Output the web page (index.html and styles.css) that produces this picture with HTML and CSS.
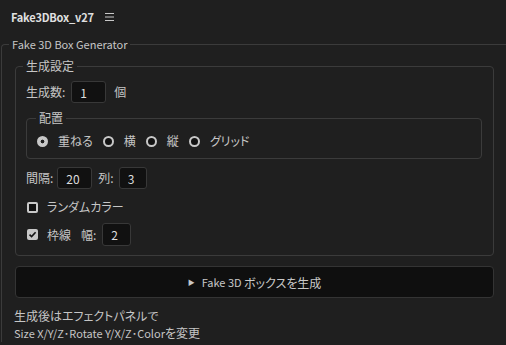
FILE: index.html
```html
<!DOCTYPE html>
<html lang="ja">
<head>
    <meta charset="UTF-8">
    <title>Fake3DBox_v27</title>
    <link rel="stylesheet" href="styles.css">
</head>
<body>
    <div class="panel-header">
        <span class="panel-title">Fake3DBox_v27</span>
        <svg class="menu-icon" width="9" height="8" viewBox="0 0 9 8">
            <path d="M0 0.5H9M0 4H9M0 7.5H9" stroke="#c8c8c8" stroke-width="1"/>
        </svg>
    </div>

    <fieldset class="generator">
        <legend class="lat">Fake 3D Box Generator</legend>

        <!-- 生成設定 -->
        <fieldset class="settings">
            <legend>生成設定</legend>

            <div class="row">
                <span>生成数:</span>
                <input class="field w35" type="text" value="1">
                <span class="unit">個</span>
            </div>

            <fieldset class="layout">
                <legend>配置</legend>
                <div class="radio-row">
                    <label class="option"><span class="radio checked"></span>重ねる</label>
                    <label class="option"><span class="radio"></span>横</label>
                    <label class="option"><span class="radio"></span>縦</label>
                    <label class="option"><span class="radio"></span>グリッド</label>
                </div>
            </fieldset>

            <div class="row spacing-row">
                <span>間隔:</span>
                <input class="field w35 gap-in" type="text" value="20">
                <span class="col-label">列:</span>
                <input class="field w28" type="text" value="3">
            </div>

            <label class="check-row">
                <span class="checkbox"></span>
                <span>ランダムカラー</span>
            </label>

            <div class="row stroke-row">
                <span class="checkbox checked">
                    <svg width="9" height="9" viewBox="0 0 9 9">
                        <path d="M1.5 4.6L3.6 6.6L7.6 2.2" fill="none" stroke="#151515" stroke-width="1.6"/>
                    </svg>
                </span>
                <span class="stroke-label">枠線</span>
                <span>幅:</span>
                <input class="field w29" type="text" value="2">
            </div>
        </fieldset>

        <button class="btn-generate" type="button"><span class="play">▶</span><span class="lat">Fake 3D&nbsp;</span>ボックスを生成</button>

        <p class="note">生成後はエフェクトパネルで<br><span class="lat">Size X/Y/Z･Rotate Y/X/Z･Color</span>を変更</p>
    </fieldset>
</body>
</html>
```

FILE: styles.css
```css
* {
    box-sizing: border-box;
}

html,
body {
    margin: 0;
    overflow: hidden;
}

body {
    width: 506px;
    height: 345px;
    background-color: #1f1f1f;
    color: #c6c6c6;
    font-family: "Noto Sans CJK JP", "Noto Sans", sans-serif;
    font-size: 12px;
    line-height: 16px;
    font-feature-settings: "palt";
}

/* latin runs are set a touch smaller, like the host panel font */
.lat {
    font-size: 11px;
}

.panel-header {
    height: 34px;
    display: flex;
    align-items: center;
    gap: 11px;
    padding-left: 11px;
}

.panel-title {
    color: #e0e0e0;
    font-size: 11px;
    font-weight: 700;
    letter-spacing: -0.2px;
}

.menu-icon {
    display: block;
}

fieldset {
    margin: 0;
    min-width: 0;
    border: 1px solid #3b3b3b;
    border-radius: 4px;
}

legend {
    padding: 0 3px;
    line-height: 16px;
}

/* outer group runs off the right and bottom edge */
.generator {
    margin: 2px 0 0 1px;
    padding: 6px 12px 0 13px;
    border-right: none;
    border-bottom: none;
    border-radius: 4px 0 0 0;
}

.generator > legend {
    margin-left: -6px;
}

.settings {
    padding: 7px 11px 9px 10px;
}

.settings > legend {
    margin-left: -3px;
}

.row {
    display: flex;
    align-items: center;
    gap: 6px;
}

.field {
    height: 22px;
    padding: 0 0 0 8px;
    border: 1px solid #383838;
    border-radius: 3px;
    background-color: #111111;
    color: #dddddd;
    font-family: inherit;
    font-size: 12px;
    outline: none;
}

.w35 { width: 35px; }
.w28 { width: 28px; }
.w29 { width: 29px; height: 23px; }

.unit {
    margin-left: 2px;
}

.layout {
    margin-top: 7px;
    padding: 7px 10px 9px 10px;
}

.layout > legend {
    margin-left: -1px;
}

.radio-row {
    display: flex;
    align-items: center;
    gap: 10px;
    height: 16px;
}

.option {
    display: flex;
    align-items: center;
    gap: 10px;
}

.radio {
    width: 11px;
    height: 11px;
    border: 2px solid #c8c8c8;
    border-radius: 50%;
    background-color: #111111;
}

.radio.checked {
    background: radial-gradient(circle, #1f1f1f 0 1.6px, #c8c8c8 2.2px);
}

.spacing-row {
    margin-top: 8px;
}

.spacing-row .gap-in {
    margin-left: -2px;
}

.col-label {
    margin-right: -1px;
}

.check-row {
    display: flex;
    align-items: center;
    gap: 9px;
    height: 16px;
    margin-top: 10px;
    padding-left: 1px;
}

.checkbox {
    width: 11px;
    height: 11px;
    border: 2px solid #c8c8c8;
    border-radius: 2px;
    background-color: #111111;
    display: flex;
    align-items: center;
    justify-content: center;
}

.checkbox.checked {
    border: none;
    background-color: #c8c8c8;
}

.stroke-row {
    margin-top: 8px;
    padding-left: 1px;
}

.stroke-label {
    margin-left: 3px;
    margin-right: 4px;
}

.btn-generate {
    display: flex;
    align-items: center;
    justify-content: center;
    width: 100%;
    height: 32px;
    margin-top: 10px;
    border: 1px solid #343434;
    border-radius: 4px;
    background-color: #0f0f0f;
    color: #c8c8c8;
    font-family: inherit;
    font-size: 12px;
    font-feature-settings: "palt";
}

.play {
    font-size: 7px;
    margin-right: 7px;
}

.note {
    margin: 9px 0 0 -1px;
    line-height: 17px;
}
```
